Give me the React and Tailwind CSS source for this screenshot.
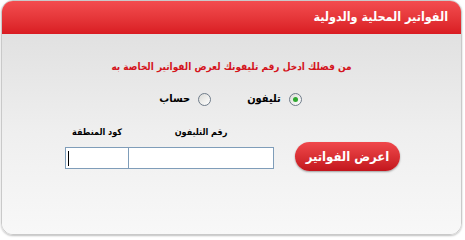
import React from 'react'

function Radio({ checked, label }) {
  return (
    <label className="flex items-center gap-[8px]">
      <span className="w-[13px] h-[13px] rounded-full border border-[#6f7c8a] bg-gradient-to-br from-[#dcdcd8] to-white flex items-center justify-center">
        {checked && <span className="w-[5px] h-[5px] rounded-full bg-[#2fa82f]" />}
      </span>
      <span className="text-[11px] font-bold text-black leading-[14px]">{label}</span>
    </label>
  )
}

export default function App() {
  return (
    <div className="w-[465px] h-[238px] bg-white pl-[1px] pr-[3px] pb-[3px]" style={{ fontFamily: '"DejaVu Sans Condensed", "DejaVu Sans", Tahoma, sans-serif' }} dir="rtl">
      <div className="h-full flex flex-col rounded-[12px] overflow-hidden border border-[#c9c9c9] shadow-[0_1px_2px_rgba(0,0,0,0.25)]">
        {/* Header */}
        <div className="h-[33px] shrink-0 bg-gradient-to-b from-[#f34c4f] to-[#d91b22] flex items-center pr-[13px]">
          <h1 className="text-white font-bold text-[12.5px] leading-none">الفواتير المحلية والدولية</h1>
        </div>

        {/* Body */}
        <div className="flex-1 bg-gradient-to-b from-[#e1e1e1] via-[#efefef] to-[#f8f8f8] flex flex-col items-center pt-[26px]">
          <p className="text-[#d4141c] text-[10px] font-bold leading-[14px]">
            من فضلك ادخل رقم تليفونك لعرض الفواتير الخاصة به
          </p>

          <div className="flex items-center gap-[36px] mt-[18px] mr-[2px]">
            <Radio checked label="تليفون" />
            <Radio label="حساب" />
          </div>

          <div className="flex items-end self-start mr-[61px] mt-[19px]">
            <button className="w-[105px] h-[29px] rounded-full bg-gradient-to-b from-[#f0474b] to-[#c3141c] text-white font-bold text-[13px] shadow-[0_1px_2px_rgba(0,0,0,0.35)] -mb-[2px]">
              اعرض الفواتير
            </button>
            <div className="flex flex-col mr-[21px]">
              <span className="text-[9px] font-bold text-black leading-[14px] text-center mb-[8px]">رقم التليفون</span>
              <div className="w-[146px] h-[22px] border border-[#7f9db9] bg-white" />
            </div>
            <div className="flex flex-col -mr-[1px]">
              <span className="text-[9px] font-bold text-black leading-[14px] text-center mb-[8px]">كود المنطقة</span>
              <div className="w-[64px] h-[22px] border border-[#7f9db9] bg-white flex items-center justify-end pl-[2px]">
                <span className="w-[1px] h-[15px] bg-black" />
              </div>
            </div>
          </div>
        </div>
      </div>
    </div>
  )
}
